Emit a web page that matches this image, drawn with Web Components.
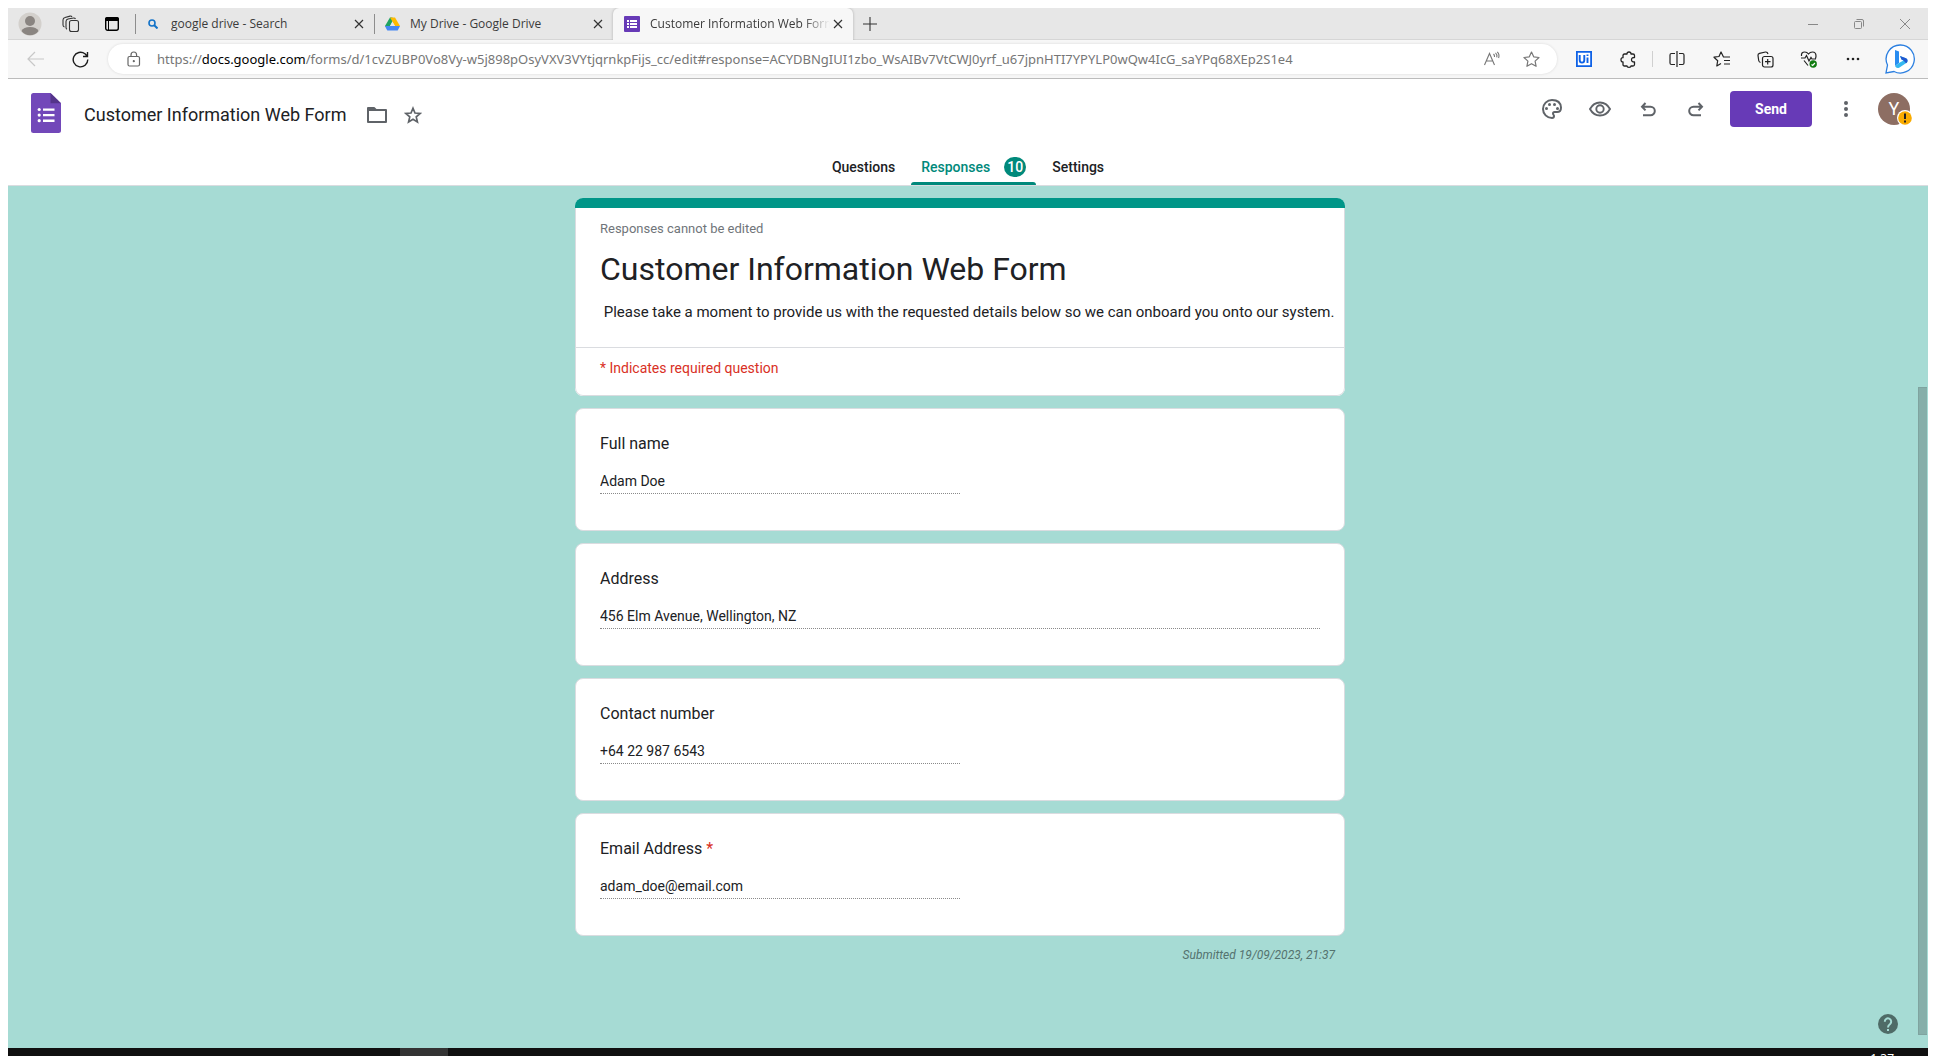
<!DOCTYPE html>
<html lang="en">
<head>
<meta charset="utf-8">
<title>Customer Information Web Form - Google Forms</title>
<style>
  html, body { height: 100%; }
  body { margin: 0; background: #fff; font-family: "Google Sans", Roboto, sans-serif; color: #202124; overflow: hidden; }
</style>
</head>
<body>
<edge-window>
  <edge-tabs slot="tabs"></edge-tabs>
  <edge-toolbar slot="toolbar"></edge-toolbar>
  <forms-header slot="page"></forms-header>
  <forms-responses slot="page">
    <form-intro heading="Customer Information Web Form">
      <span slot="status">Responses cannot be edited</span>
      <span>&nbsp;Please take a moment to provide us with the requested details below so we can onboard you onto our system.</span>
      <span slot="note">* Indicates required question</span>
    </form-intro>
    <form-answer label="Full name" value="Adam Doe"></form-answer>
    <form-answer label="Address" value="456 Elm Avenue, Wellington, NZ" wide></form-answer>
    <form-answer label="Contact number" value="+64 22 987 6543"></form-answer>
    <form-answer label="Email Address" value="adam_doe@email.com" required></form-answer>
    <span slot="submitted">Submitted 19/09/2023, 21:37</span>
  </forms-responses>
  <task-bar slot="taskbar"></task-bar>
</edge-window>

<script>
const base = `<style>
  *, *::before, *::after { box-sizing: border-box; }
  button { font: inherit; color: inherit; background: none; border: 0; padding: 0; margin: 0; display: inline-flex; align-items: center; justify-content: center; flex: none; }
  svg { display: block; flex: none; }
  a { color: inherit; text-decoration: none; }
</style>`;

function define(name, render) {
  customElements.define(name, class extends HTMLElement {
    connectedCallback() {
      if (this.shadowRoot) return;
      this.attachShadow({ mode: 'open' }).innerHTML = base + render(this);
    }
  });
}

const formsLogo = `<svg width="30" height="40" viewBox="0 0 30 40"><path fill="#7248b9" d="M2.500 0H19.500L30 10.300V37.500Q30 40 27.500 40H2.500Q0 40 0 37.500V2.500Q0 0 2.500 0Z"/><path fill="#54348a" d="M19.500 0L30 10.300H19.500Z"/><g fill="#fff"><circle cx="8.200" cy="16.500" r="1.600"/><circle cx="8.200" cy="22.100" r="1.600"/><circle cx="8.200" cy="27.700" r="1.600"/><path d="M12 15.400h11.500v2.300H12zM12 21h11.500v2.300H12zM12 26.600h11.500v2.300H12z"/></g></svg>`;

define('edge-window', () => `<style>
  :host { display: flex; flex-direction: column; height: 100vh; padding: 8px 8px 0; box-sizing: border-box; }
  main { flex: 1; min-height: 0; display: flex; flex-direction: column; }
</style>
<slot name="tabs"></slot><slot name="toolbar"></slot><main><slot name="page"></slot></main><slot name="taskbar"></slot>`);

define('edge-tab', el => `<style>
  :host { display: flex; align-items: center; width: 239px; height: 32px; padding: 0 7px 0 10px; font-size: 12px; color: #3b3b3b; flex: none; border-bottom: 1px solid #d6d6d6; box-sizing: border-box; }
  :host([active]) { width: 240px; padding-left: 11px; background: #f7f7f7; border-radius: 6px 6px 0 0; border-bottom-color: #f7f7f7; box-shadow: 0 0 3px rgba(0,0,0,.25); clip-path: inset(0 -4px 0 -4px); }
  a { flex: 1; min-width: 0; display: flex; align-items: center; gap: 10px; }
  .i { width: 16px; display: flex; justify-content: center; flex: none; }
  .t { flex: 1; white-space: nowrap; overflow: hidden; line-height: 16px; }
  :host([active]) .t { -webkit-mask: linear-gradient(90deg, #000 85%, transparent); mask: linear-gradient(90deg, #000 85%, transparent); }
  button { width: 16px; height: 16px; }
</style>
<a href="#"><span class="i"><slot></slot></span><span class="t">${el.getAttribute('label')}</span></a>
<button aria-label="Close tab"><svg width="10" height="10" viewBox="0 0 10 10"><path d="M1 1l8 8M9 1l-8 8" stroke="#333" stroke-width="1.200"/></svg></button>`);

define('edge-tabs', () => `<style>
  :host { display: flex; align-items: center; height: 32px; background: #e7e7e7; font-family: "Segoe UI", "Open Sans", sans-serif; flex: none; }
  .tools { display: flex; align-items: center; height: 32px; width: 127px; padding-left: 10px; gap: 17px; border-bottom: 1px solid #d6d6d6; flex: none; }
  .tools button { width: 24px; height: 24px; }
  i { width: 1px; height: 20px; background: #8d8d8d; flex: none; margin-right: -1px; }
  .rest { flex: 1; height: 32px; display: flex; align-items: center; border-bottom: 1px solid #d6d6d6; padding-left: 10px; }
  .win { margin-left: auto; display: flex; }
  .win button { width: 46px; height: 30px; }
</style>
<div class="tools">
  <button aria-label="Profile"><svg width="24" height="24" viewBox="0 0 24 24"><circle cx="12" cy="12" r="11.500" fill="#d3d0cc"/><circle cx="12" cy="9" r="5" fill="#8a8581"/><path d="M3.500 19Q5.500 15 12 15t8.500 4Q17 23.300 12 23.300T3.500 19Z" fill="#8a8581"/></svg></button>
  <button aria-label="Workspaces"><svg width="18" height="18" viewBox="0 0 18 18" fill="none" stroke="#333" stroke-width="1.100"><rect x="7.500" y="5.500" width="9" height="11" rx="2"/><path d="M5 14.200q-1-.5-1-1.700V6.500q0-2 2-2.500l5.500-1q1.500-.1 2 1M2.500 12Q1 11.500 1 10V5q0-2 2-2.500l5-1.400q1.500-.2 2 .9"/></svg></button>
  <button aria-label="Tab actions"><svg width="16" height="16" viewBox="0 0 16 16"><rect x="1.700" y="1.700" width="12.600" height="12.600" rx="2" fill="none" stroke="#000" stroke-width="1.400"/><path d="M1 5V3q0-2 2-2h10q2 0 2 2v2z"/><path d="M4.500 5v9" stroke="#000"/></svg></button>
</div>
<i></i>
<edge-tab label="google drive - Search"><svg width="10" height="10" viewBox="0 0 10 10" fill="none" stroke="#1473c8"><circle cx="4" cy="4" r="3" stroke-width="1.600"/><path d="M6 6l3.500 3.500" stroke-width="2"/></svg></edge-tab>
<i></i>
<edge-tab label="My Drive - Google Drive"><svg width="15" height="14" viewBox="0 0 15 14"><path fill="#1ea362" d="M5 0.500h2.500L7.500 4 3 13 0 9z"/><path fill="#ffba00" d="M5 .5h5L15 9h-5z"/><path fill="#4688f4" d="M0 9h15l-2.300 4.500H2.300z"/><path fill="#e7e7e7" d="M7.500 5l2.300 4H5.200z"/></svg></edge-tab>
<edge-tab active label="Customer Information Web Form"><svg width="16" height="16" viewBox="0 0 16 16"><rect width="16" height="16" rx="1" fill="#673ab7"/><path fill="#fff" d="M3 4h2v2H3zM6 4h7v2H6zM3 7h2v2H3zM6 7h7v2H6zM3 10h2v2H3zM6 10h7v2H6z"/></svg></edge-tab>
<div class="rest">
  <button aria-label="New tab"><svg width="14" height="14" viewBox="0 0 14 14"><path d="M7 0v14M0 7h14" stroke="#333" stroke-width="1.100"/></svg></button>
  <div class="win">
    <button aria-label="Minimize"><svg width="10" height="10" viewBox="0 0 10 10"><path d="M0 5.500h10" stroke="#888"/></svg></button>
    <button aria-label="Restore"><svg width="10" height="10" viewBox="0 0 10 10" fill="none" stroke="#888"><rect x=".5" y="2.500" width="7" height="7" rx="1"/><path d="M2.500 .5H8q1.500 0 1.500 1.500v5.500"/></svg></button>
    <button aria-label="Close"><svg width="10" height="10" viewBox="0 0 10 10"><path d="M0 0l10 10M10 0L0 10" stroke="#888"/></svg></button>
  </div>
</div>`);

define('edge-toolbar', () => `<style>
  :host { display: flex; align-items: center; height: 39px; padding: 0 3px 0 19px; background: #f7f7f7; border-bottom: 1px solid #bcbcbc; font-family: "Segoe UI", "Noto Sans", sans-serif; font-size: 13px; color: #767676; flex: none; box-sizing: border-box; }
  .nav { display: flex; gap: 27px; margin-right: 19px; }
  .bar { flex: 1; min-width: 0; height: 30px; border-radius: 15px; background: #fff; display: flex; align-items: center; padding: 0 17px 0 19px; box-shadow: 0 0 3px rgba(0,0,0,.12); }
  .url { flex: 1; min-width: 0; margin-left: 16px; white-space: nowrap; overflow: hidden; line-height: 20px; }
  .url b { font-weight: 400; color: #000; }
  .bar .r { display: flex; gap: 22px; }
  .ext { display: flex; align-items: center; margin-left: 5px; }
  .ext button { width: 44px; height: 30px; }
  .ext button:last-child { width: 50px; }
  .ext i { width: 1px; height: 16px; background: #d0d0d0; margin: 0 2px; }
</style>
<div class="nav">
  <button aria-label="Back"><svg width="18" height="16" viewBox="0 0 18 16" fill="none" stroke="#c8c8c8" stroke-width="1.200"><path d="M17 8H1M8 1L1 8l7 7"/></svg></button>
  <button aria-label="Refresh"><svg width="17" height="17" viewBox="0 0 17 17" fill="none" stroke="#1b1b1b" stroke-width="1.400"><path d="M15.800 8.500A7.300 7.300 0 1 1 13 2.800L15 5M15.500 1v4.500H11"/></svg></button>
</div>
<div class="bar">
  <svg width="14" height="16" viewBox="0 0 14 16" fill="none" stroke="#666" stroke-width="1.200"><rect x="1" y="5.500" width="11.500" height="9.500" rx="1.500"/><path d="M4 5.500V4a2.800 3 0 0 1 5.600 0v1.500"/><circle cx="6.800" cy="10.200" r=".5" fill="#666"/></svg>
  <span class="url">https://<b>docs.google.com</b>/forms/d/1cvZUBP0Vo8Vy-w5j898pOsyVXV3VYtjqrnkpFijs_cc/edit#response=ACYDBNgIUI1zbo_WsAIBv7VtCWJ0yrf_u67jpnHTI7YPYLP0wQw4IcG_saYPq68XEp2S1e4</span>
  <div class="r">
    <button aria-label="Read aloud"><svg width="18" height="16" viewBox="0 0 18 16" fill="none" stroke="#777" stroke-width="1.100"><path d="M1.500 14L6.500 2.500 11.500 14M3 10h7M10.500 3q1.300 1.200 1 3M12.500 1.800q2 1.800 1.300 4.600M14.300 .8q2.500 2.500 1.300 6.200"/></svg></button>
    <button aria-label="Favourite"><svg width="17" height="16" viewBox="0 0 17 16" fill="none" stroke="#777" stroke-width="1.200" stroke-linejoin="round"><path d="M8.500 1l2.200 4.800 5.300.7-3.900 3.600 1 5.200-4.600-2.600-4.600 2.600 1-5.200L1 6.500l5.300-.7z"/></svg></button>
  </div>
</div>
<div class="ext">
  <button aria-label="UiPath"><svg width="16" height="16" viewBox="0 0 16 16"><path fill="#fff" stroke="#0f62e6" stroke-width="1.800" d="M.9.9h14.200v14.200H.9z"/><path d="M3.700 4v5q0 2.600 2.300 2.600T8.300 9V4M11.500 6.500V12M11.500 3.600v1.500" fill="none" stroke="#0f62e6" stroke-width="1.900"/></svg></button>
  <button aria-label="Extensions"><svg width="17" height="17" viewBox="0 0 17 17" fill="none" stroke="#222" stroke-width="1.300" stroke-linejoin="round"><path d="M4.500 3H7Q7 1 9 1T11 3H13Q14.500 3 14.500 4.500V6.500Q11.500 6.300 11.500 8.700T14.500 11V13.500Q14.500 15 13 15H11Q11 16.300 9 16.300T7 15H4.500Q3 15 3 13.500V11Q1 11 1 8.800T3 6.700V4.500Q3 3 4.500 3Z"/></svg></button>
  <i></i>
  <button aria-label="Split screen"><svg width="16" height="16" viewBox="0 0 16 16" fill="none" stroke="#222" stroke-width="1.200"><path d="M6 2.500H2.500Q1 2.500 1 4v8q0 1.500 1.500 1.500H6M10 2.500h3.500Q15 2.500 15 4v8q0 1.500-1.500 1.500H10M8 0v16"/></svg></button>
  <button aria-label="Favourites"><svg width="17" height="16" viewBox="0 0 17 16" fill="none" stroke="#222" stroke-width="1.200" stroke-linejoin="round"><path d="M10.500 6L8 1 6 5.500 1 6.200l3.700 3.500L3.800 15 8 12.600M10 6h7M11 9.500h6M11 13h6"/></svg></button>
  <button aria-label="Collections"><svg width="17" height="17" viewBox="0 0 17 17" fill="none" stroke="#222" stroke-width="1.200"><rect x="5.500" y="5.500" width="10.500" height="10.500" rx="2"/><path d="M10.700 8v5.500M8 10.700h5.500M3.500 11.500Q2 11 1.700 9.500L1 4.500Q.8 2.800 2.500 2.300L8.500 1q2-.2 2.500 2"/></svg></button>
  <button aria-label="Browser essentials"><svg width="18" height="17" viewBox="0 0 18 17" fill="none" stroke="#222" stroke-width="1.200"><path d="M1.500 5Q1 1 4.800 1 7 1 8.500 3 10 1 12.500 1 16 1 16 5q0 1-.5 2.500M4 9.500l4 5M1 7h4l1.500-2.500L9 10l2-3.500L12 8h4"/><circle cx="13.200" cy="13" r="3.700" fill="#107c10" stroke="none"/><path d="M11.500 13.500l1.200 1 2.200-2.500" stroke="#fff"/></svg></button>
  <button aria-label="More"><svg width="14" height="4" viewBox="0 0 14 4" fill="#222"><circle cx="2" cy="2" r="1.300"/><circle cx="7" cy="2" r="1.300"/><circle cx="12" cy="2" r="1.300"/></svg></button>
  <button aria-label="Bing"><svg width="32" height="32" viewBox="0 0 32 32"><path d="M16.500 2A14 14 0 1 1 10 28.500L2 30l1.500-8A14 14 0 0 1 16.500 2Z" fill="#fff" stroke="#2b7fe0" stroke-width="1.300"/><path fill="#2a8df0" d="M11 7l4 1.500V20l-4 3z"/><path fill="#36b8f0" d="M11 23l4-3 4.500-2.500-2-1-1.500-3.500 6 2.300q2.500 1.500 1 4.200L15.500 24.500q-3 1.500-4.500-1.500z"/><path fill="#2158cf" d="M16 13l6 2.300q2.500 1.500 1 4.200l-1 .7-2.500-2.700-2-1z"/></svg></button>
</div>`);

define('forms-header', () => `<style>
  :host { display: block; background: #fff; border-bottom: 1px solid #dadce0; color: #202124; flex: none; }
  .top { display: flex; align-items: flex-start; justify-content: space-between; height: 69px; padding: 12px 18px 0 23px; }
  .name { display: flex; align-items: center; height: 44px; }
  h1 { font-size: 18px; font-weight: 400; line-height: 24px; margin: 3px 3px 0 23px; }
  .name button { margin: 3px 0 0 17px; }
  .acts { display: flex; align-items: center; height: 36px; }
  .acts > button { width: 48px; height: 36px; }
  .acts .send { width: 82px; margin: 0 10px; background: #673ab7; color: #fff; border-radius: 4px; font-size: 14px; font-weight: 700; }
  .acts .av { position: relative; width: 32px; margin-left: 8px; }
  .disc { width: 32px; height: 32px; border-radius: 50%; background: #8d6e63; color: #fff; font-size: 18px; line-height: 32px; }
  .warn { position: absolute; right: -3px; bottom: 1px; }
  nav { display: flex; justify-content: center; gap: 16px; height: 37px; font-size: 14px; font-weight: 500; line-height: 20px; }
  nav a { display: flex; align-items: flex-start; height: 37px; padding: 9px 0 0; }
  nav a.on { color: #00897b; padding: 9px 10px 0; position: relative; }
  nav a.on::after { content: ""; position: absolute; left: 0; right: 0; bottom: 0; height: 3px; background: #00897b; border-radius: 3px 3px 0 0; }
  .n { width: 22px; height: 20px; border-radius: 10px; background: #00897b; color: #fff; text-align: center; margin-left: 14px; }
</style>
<div class="top">
  <div class="name">
    ${formsLogo}
    <h1>Customer Information Web Form</h1>
    <button aria-label="Move to folder"><svg width="20" height="16" viewBox="0 0 20 16"><path fill="none" stroke="#5f6368" stroke-width="2" stroke-linejoin="round" d="M1 1h6l2 2h10v12H1z"/><path fill="#5f6368" d="M1 1h6l2 2v1H1z"/></svg></button>
    <button aria-label="Star"><svg width="18" height="18" viewBox="0 0 20 20"><path fill="none" stroke="#5f6368" stroke-width="1.900" d="M10 2.500l2.200 5.300 5.800.5-4.400 3.800 1.300 5.600L10 14.700l-4.900 3 1.300-5.600L2 8.300l5.800-.5z"/></svg></button>
  </div>
  <div class="acts">
    <button aria-label="Customise theme"><svg width="20" height="20" viewBox="0 0 20 20"><path fill="none" stroke="#5f6368" stroke-width="2" d="M10 1a9 9 0 0 0 0 18q2 0 2-2 0-.8-.6-1.400Q11 15 11 14.500q0-1.500 1.500-1.500H15q4 0 4-4.500Q18.500 1 10 1Z"/><g fill="#5f6368"><circle cx="4.500" cy="9.500" r="1.500"/><circle cx="7.500" cy="5.500" r="1.500"/><circle cx="12.500" cy="5.500" r="1.500"/><circle cx="15.500" cy="9.500" r="1.500"/></g></svg></button>
    <button aria-label="Preview"><svg width="22" height="16" viewBox="0 0 22 16" fill="none" stroke="#5f6368" stroke-width="1.900"><path d="M11 1.500Q17.500 1.500 21 8 17.500 14.500 11 14.500T1 8Q4.500 1.500 11 1.500Z"/><circle cx="11" cy="8" r="3.700"/></svg></button>
    <button aria-label="Undo"><svg width="16" height="15" viewBox="0 0 16 15" fill="none" stroke="#5f6368" stroke-width="2"><path d="M5.500 1L2 4.700l3.500 3.700M2 4.700h8.500a4.300 4.300 0 0 1 0 8.600H3"/></svg></button>
    <button aria-label="Redo"><svg width="16" height="15" viewBox="0 0 16 15" fill="none" stroke="#5f6368" stroke-width="2"><path d="M10.500 1L14 4.700l-3.500 3.700M14 4.700H5.500a4.300 4.300 0 0 0 0 8.600H13"/></svg></button>
    <button class="send">Send</button>
    <button aria-label="More options"><svg width="4" height="16" viewBox="0 0 4 16" fill="#5f6368"><circle cx="2" cy="2" r="2"/><circle cx="2" cy="8" r="2"/><circle cx="2" cy="14" r="2"/></svg></button>
    <button class="av" aria-label="Account"><span class="disc">Y</span><svg class="warn" width="16" height="16" viewBox="0 0 16 16"><circle cx="8" cy="8" r="8" fill="#fff"/><circle cx="8" cy="8" r="6.800" fill="#f9ab00"/><path d="M7 3.500h2v5.500H7zM7 10.500h2v2H7z" fill="#202124"/></svg></button>
  </div>
</div>
<nav><a href="#">Questions</a><a href="#" class="on">Responses<span class="n">10</span></a><a href="#">Settings</a></nav>`);

define('forms-responses', () => `<style>
  :host { display: flex; flex-direction: column; align-items: center; flex: 1; min-height: 0; background: #a6dbd4; position: relative; padding: 12px 16px 0 0; font-family: Roboto, sans-serif; box-sizing: border-box; }
  .col { display: flex; flex-direction: column; gap: 12px; width: 770px; max-width: 100%; }
  .sub { font-size: 12px; font-style: italic; line-height: 14px; color: #54726e; text-align: right; padding-right: 10px; }
  .help { position: absolute; right: 30px; bottom: 14px; }
  .bar { position: absolute; right: 1px; top: 201px; bottom: 13px; width: 9px; background: #86afaa; border: 1px solid #7fa39f; border-right: 0; }
</style>
<div class="col"><slot></slot><div class="sub"><slot name="submitted"></slot></div></div>
<div class="bar"></div>
<button class="help" aria-label="Help"><svg width="20" height="20" viewBox="0 0 20 20"><circle cx="10" cy="10" r="10" fill="#4f6b67"/><path d="M6.800 7.800a3.200 3.200 0 1 1 5.300 2.200Q10 11.500 10 13.500" fill="none" stroke="#a6dbd4" stroke-width="2"/><path fill="#a6dbd4" d="M9 15h2v2H9z"/></svg></button>`);

define('form-intro', el => `<style>
  :host { display: block; background: #fff; border-radius: 8px; overflow: hidden; box-sizing: border-box; }
  .strip { height: 10px; background: #009688; }
  .in { border: 1px solid #dadce0; border-top: 0; border-radius: 0 0 8px 8px; }
  .a { padding: 13px 24px 23px; border-bottom: 1px solid #dadce0; }
  .s { font-size: 13px; line-height: 16px; color: #70757a; }
  h2 { font-size: 32px; font-weight: 400; line-height: 40px; margin: 12px 0 11px; }
  p { font-size: 15px; line-height: 24px; margin: 0; white-space: nowrap; }
  .r { padding: 10px 24px 17px; font-size: 14px; line-height: 20px; color: #d93025; }
</style>
<div class="strip"></div>
<div class="in">
<div class="a"><div class="s"><slot name="status"></slot></div>
<h2>${el.getAttribute('heading')}</h2>
<p><slot></slot></p></div>
<div class="r"><slot name="note"></slot></div></div>`);

define('form-answer', el => `<style>
  :host { display: block; background: #fff; border: 1px solid #dadce0; border-radius: 8px; padding: 23px 24px 36px; box-sizing: border-box; }
  label { display: block; font-size: 16px; line-height: 24px; color: #202124; }
  label span { color: #d93025; }
  input { display: block; width: ${el.hasAttribute('wide') ? '100%' : '50%'}; height: 25px; margin-top: 13px; padding: 0 0 1px; border: 0; border-bottom: 1px dotted #8a8a8a; border-radius: 0; background: none; font: 14px/20px Roboto, sans-serif; color: #202124; outline: 0; }
</style>
<label for="v">${el.getAttribute('label')}${el.hasAttribute('required') ? ' <span>*</span>' : ''}</label>
<input id="v" readonly value="${el.getAttribute('value')}">`);

define('task-bar', () => `<style>
  :host { display: flex; justify-content: space-between; height: 8px; overflow: hidden; background: #101010; color: #fff; font: 12px/16px "Segoe UI", "Noto Sans", sans-serif; flex: none; padding: 0 34px 0 392px; box-sizing: border-box; }
  button { width: 48px; height: 8px; background: #333; }
  time { padding-top: 3px; }
</style>
<button aria-label="Microsoft Edge"></button><time>1:37</time>`);
</script>
</body>
</html>
